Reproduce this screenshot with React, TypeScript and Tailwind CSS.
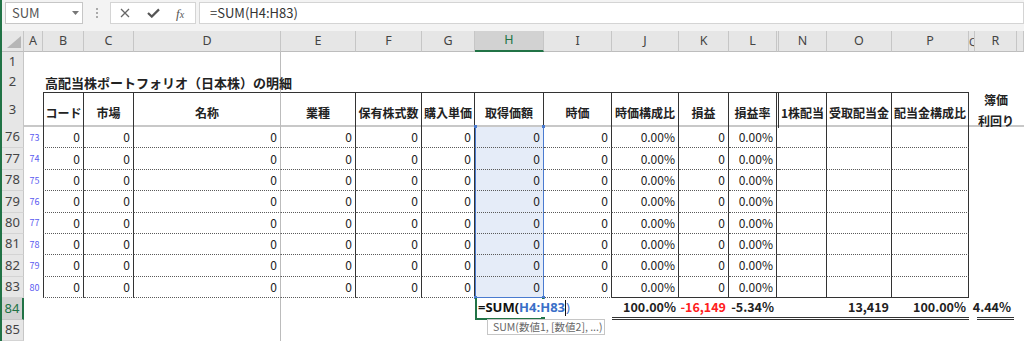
import React from 'react';

const GRID =
  'grid grid-cols-[22px_19px_41px_50px_147px_75px_66px_53px_69px_68px_67px_50px_48px_2px_48px_65px_77px_6px_42px_7px]';

const DOT = 'border-b border-b-[#5a5a5a] [border-bottom-style:dotted]!';
const SOLID_B = 'border-b border-b-[#333]';
const DBL = 'border-b-[3px] border-b-[#333] [border-bottom-style:double]!';
const NUM = 'flex items-center justify-end pr-[3px] text-[12px] text-[#222] whitespace-nowrap';
const HEAD = 'flex items-end justify-center pb-[6px] font-bold text-[12px] text-[#222] whitespace-nowrap border-t border-t-[#333]';
const TOTAL = 'flex items-center justify-end pr-[3px] text-[12.5px] font-bold text-[#222] whitespace-nowrap';

function RowHead({ n, active }: { n: number | string; active?: boolean }) {
  if (active) {
    return (
      <div className="flex items-center justify-center bg-[#d2d2d2] border-r-2 border-r-[#217346] border-b border-b-[#c6c6c6] text-[13px] text-[#217346] font-['Noto_Sans',sans-serif]">
        {n}
      </div>
    );
  }
  return (
    <div className="flex items-center justify-center bg-[#e6e6e6] border-r border-r-[#c6c6c6] border-b border-b-[#d4d4d4] text-[13px] text-[#444] font-['Noto_Sans',sans-serif]">
      {n}
    </div>
  );
}

function ColHeaders() {
  const letters = ['A', 'B', 'C', 'D', 'E', 'F', 'G', 'H', 'I', 'J', 'K', 'L', '', 'N', 'O', 'P', 'Q', 'R', ''];
  return (
    <div className={`${GRID} h-[21px] font-['Noto_Sans',sans-serif] text-[12.5px]`}>
      <div className="relative bg-[#e6e6e6] border-r border-r-[#c6c6c6] border-b border-b-[#bdbdbd]">
        <svg className="absolute left-[4px] top-[4px]" width="16" height="14" viewBox="0 0 16 14">
          <polygon points="1,13 15,13 15,1" fill="#b6b6b6" />
        </svg>
      </div>
      {letters.map((l, i) =>
        l === 'H' ? (
          <div
            key={i}
            className="flex items-center justify-center bg-[#d2d2d2] border-r border-r-[#c6c6c6] border-b-2 border-b-[#217346] text-[#217346]"
          >
            H
          </div>
        ) : l === 'Q' ? (
          <div
            key={i}
            className="flex items-center justify-start overflow-hidden bg-[#e6e6e6] border-r border-r-[#c6c6c6] border-b border-b-[#bdbdbd] text-[#444]"
          >
            <span className="text-[11px] leading-none">Q</span>
          </div>
        ) : (
          <div
            key={i}
            className="flex items-center justify-center overflow-hidden bg-[#e6e6e6] border-r border-r-[#c6c6c6] border-b border-b-[#bdbdbd] text-[#444]"
          >
            {l}
          </div>
        )
      )}
    </div>
  );
}

function BlankRow({ n, h }: { n: number; h: string }) {
  return (
    <div className={`${GRID} ${h}`}>
      <RowHead n={n} />
      <div />
      <div />
      <div />
      <div className="border-r border-r-[#bcbcbc]" />
    </div>
  );
}

function DataRow({ n, i }: { n: number; i: number }) {
  const last = i === 7;
  const jb = last ? SOLID_B : DOT;
  return (
    <div className={`${GRID} h-[21.375px]`}>
      <RowHead n={n} />
      <div className="flex items-center justify-center pl-[2px] text-[9px] text-[#5a5af0]">{n - 3}</div>
      <div className={`${NUM} border-l border-l-[#333] border-r border-r-[#333] ${DOT}`}>0</div>
      <div className={`${NUM} border-r border-r-[#333] ${DOT}`}>0</div>
      <div className={`${NUM} border-r border-r-[#bcbcbc] ${DOT}`}>0</div>
      <div className={`${NUM} border-r border-r-[#333] ${DOT}`}>0</div>
      <div className={`${NUM} border-r border-r-[#333] ${DOT}`}>0</div>
      <div className={`${NUM} border-r border-r-[#333] ${DOT}`}>0</div>
      <div
        className={`${NUM} relative bg-[#e5ecf8] border-l border-l-[#4a7bd0] border-r border-r-[#4a7bd0] ${
          last ? 'border-b border-b-[#4a7bd0]' : DOT
        }`}
      >
        {i === 0 && (
          <>
            <span className="absolute left-[-2px] top-[-2px] w-[3px] h-[3px] bg-[#4a7bd0]" />
            <span className="absolute right-[-2px] top-[-2px] w-[3px] h-[3px] bg-[#4a7bd0]" />
          </>
        )}
        {last && (
          <>
            <span className="absolute left-[-2px] bottom-[-2px] w-[3px] h-[3px] bg-[#4a7bd0]" />
            <span className="absolute right-[-2px] bottom-[-2px] w-[3px] h-[3px] bg-[#4a7bd0]" />
          </>
        )}
        0
      </div>
      <div className={`${NUM} border-r border-r-[#333] ${DOT}`}>0</div>
      <div className={`${NUM} border-r border-r-[#333] ${jb}`}>0.00%</div>
      <div className={`${NUM} border-r border-r-[#333] ${jb}`}>0</div>
      <div className={`${NUM} border-r border-r-[#333] ${jb}`}>0.00%</div>
      <div className={jb} />
      <div className={`border-r border-r-[#333] ${jb}`} />
      <div className={`border-r border-r-[#333] ${jb}`} />
      <div className={`border-r border-r-[#333] ${jb}`} />
      <div />
      <div />
      <div />
    </div>
  );
}

export default function App() {
  const rows = [76, 77, 78, 79, 80, 81, 82, 83];
  return (
    <div className="flex w-[1024px] h-[341px] overflow-hidden bg-white font-['Noto_Sans_CJK_JP',sans-serif]">
      <div className="w-[2px] bg-[#217346]" />
      <div className="w-[1022px]">
        {/* formula bar */}
        <div className="h-[31px] bg-[#f3f3f3] flex items-start pt-[2px] pl-[3px]">
          <div className="relative w-[78px] h-[22px] bg-white border border-[#c6c6c6] flex items-center pl-[6px] text-[13px] text-[#555]">
            SUM
            <svg className="absolute right-[3px] top-[8px]" width="7" height="4" viewBox="0 0 7 4">
              <polygon points="0,0 7,0 3.5,4" fill="#777" />
            </svg>
          </div>
          <div className="w-[27px] h-[22px] flex flex-col items-center justify-center gap-[2px]">
            <span className="w-[2px] h-[2px] bg-[#aaa]" />
            <span className="w-[2px] h-[2px] bg-[#aaa]" />
            <span className="w-[2px] h-[2px] bg-[#aaa]" />
          </div>
          <div className="relative w-[86px] h-[22px] bg-white border border-[#d4d4d4] flex items-center">
            <svg className="absolute left-[9px] top-[5px]" width="10" height="10" viewBox="0 0 10 10">
              <path d="M1 1 L9 9 M9 1 L1 9" stroke="#666" strokeWidth="1.3" fill="none" />
            </svg>
            <svg className="absolute left-[36px] top-[5px]" width="13" height="10" viewBox="0 0 13 10">
              <path d="M1 5 L4.8 8.6 L12 1.4" stroke="#555" strokeWidth="2.2" fill="none" />
            </svg>
            <span className="absolute left-[65px] top-[1px] text-[13px] italic text-[#555] font-['Liberation_Serif',serif]">
              f<span className="text-[10px]">x</span>
            </span>
          </div>
          <div className="ml-[3px] flex-1 h-[22px] bg-white border border-[#d4d4d4] flex items-center pl-[10px] text-[13px] text-[#333]">
            =SUM(H4:H83)
          </div>
        </div>

        <ColHeaders />

        <BlankRow n={1} h="h-[20px]" />

        {/* row 2 title */}
        <div className={`${GRID} h-[20px]`}>
          <RowHead n={2} />
          <div />
          <div className="col-span-3 flex items-center pl-[2px] text-[13px] font-bold text-[#222] whitespace-nowrap border-r border-r-[#bcbcbc]">
            高配当株ポートフォリオ（日本株）の明細
          </div>
        </div>

        {/* row 3 headers */}
        <div className={`${GRID} h-[33px]`}>
          <RowHead n={3} />
          <div />
          <div className={`${HEAD} border-l border-l-[#333] border-r border-r-[#333]`}>コード</div>
          <div className={`${HEAD} border-r border-r-[#333]`}>市場</div>
          <div className={`${HEAD} border-r border-r-[#bcbcbc]`}>名称</div>
          <div className={`${HEAD} border-r border-r-[#333]`}>業種</div>
          <div className={`${HEAD} border-r border-r-[#333]`}>保有株式数</div>
          <div className={`${HEAD} border-r border-r-[#333]`}>購入単価</div>
          <div className={`${HEAD} border-r border-r-[#333]`}>取得価額</div>
          <div className={`${HEAD} border-r border-r-[#333]`}>時価</div>
          <div className={`${HEAD} border-r border-r-[#333]`}>時価構成比</div>
          <div className={`${HEAD} border-r border-r-[#333]`}>損益</div>
          <div className={`${HEAD} border-r border-r-[#333]`}>損益率</div>
          <div className={`${HEAD} border-r border-r-[#333]`} />
          <div className={`${HEAD} border-r border-r-[#333]`}>1株配当</div>
          <div className={`${HEAD} border-r border-r-[#333]`}>受取配当金</div>
          <div className={`${HEAD} border-r border-r-[#333]`}>配当金構成比</div>
          <div />
          <div className="flex flex-col items-center justify-center gap-[6px] font-bold text-[12px] leading-[15px] text-[#222] whitespace-nowrap">
            <span>簿価</span>
            <span>利回り</span>
          </div>
          <div />
        </div>

        <div className="h-[2px] bg-[#c8c8c8]" />

        {rows.map((n, i) => (
          <DataRow key={n} n={n} i={i} />
        ))}

        {/* row 84 totals */}
        <div className={`${GRID} h-[22px]`}>
          <RowHead n={84} active />
          <div />
          <div />
          <div />
          <div className="border-r border-r-[#bcbcbc]" />
          <div />
          <div />
          <div />
          <div className="relative z-10 flex items-center whitespace-nowrap bg-white border-l-2 border-r-2 border-b-2 border-[#217346]">
            <span className="relative z-10 flex items-center h-[18px] bg-white pl-[1px] pr-[2px] text-[13px] font-bold font-['Open_Sans',sans-serif]">
              <span className="text-[#111]">=SUM(</span>
              <span className="text-[#3a6fc8]">H4:H83</span>
              <span className="w-[1px] h-[16px] bg-[#111]" />
              <span className="text-[#3a6fc8] font-normal">)</span>
            </span>
            <span className="absolute right-[-3px] bottom-[-3px] w-[4px] h-[4px] bg-[#217346]" />
            <div className="absolute left-[10px] top-[21px] w-[118px] h-[16px] bg-white border border-[#c6c6c6] flex items-center pl-[5px] text-[10.5px] font-normal text-[#666]">
              SUM(数値1, [数値2], ...)
            </div>
          </div>
          <div />
          <div className={`${TOTAL} ${DBL}`}>100.00%</div>
          <div className={`${TOTAL} ${DBL} text-[#ff2020]`}>-16,149</div>
          <div className={`${TOTAL} ${DBL}`}>-5.34%</div>
          <div className={DBL} />
          <div className={DBL} />
          <div className={`${TOTAL} ${DBL}`}>13,419</div>
          <div className={`${TOTAL} ${DBL}`}>100.00%</div>
          <div />
          <div className={`${TOTAL} ${DBL} ml-[2px] mr-[3px] pr-0`}>4.44%</div>
          <div />
        </div>

        <BlankRow n={85} h="h-[21px]" />
      </div>
    </div>
  );
}
